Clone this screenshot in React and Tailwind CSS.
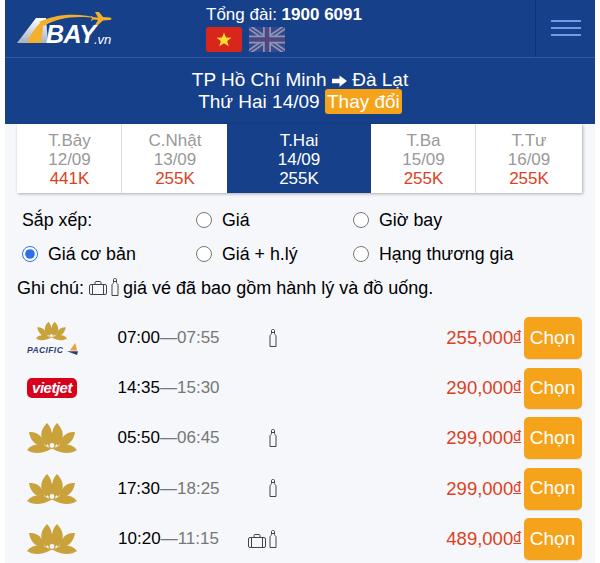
const Lotus = ({ className }) => (
  <svg viewBox="0 0 50 30" className={className} fill="#c9a23c">
    <path d="M20 0C13 7 12 15 19 23C26 17 27 7 20 0Z" />
    <path d="M30 0C37 7 38 15 31 23C24 17 23 7 30 0Z" />
    <path d="M2 9C10 8 17 14 18 24C9 24 3 17 2 9Z" />
    <path d="M48 9C40 8 33 14 32 24C41 24 47 17 48 9Z" />
    <path d="M0 27C6 20 15 20 24 26C15 31 6 31 0 27Z" />
    <path d="M50 27C44 20 35 20 26 26C35 31 44 31 50 27Z" />
    <path d="M25 9C21 14 20 18 21 22L29 22C30 18 29 14 25 9Z" />
    <circle cx="25" cy="22.500" r="3" fill="#f5f7fb" stroke="#c9a23c" strokeWidth="1.200" />
  </svg>
);

const Suitcase = ({ className }) => (
  <svg viewBox="0 0 18 14" className={className} fill="none" stroke="#444" strokeWidth="1">
    <rect x="0.500" y="3.500" width="17" height="10" rx="1.500" />
    <path d="M6 3.500V1.500C6 1 6.500 .5 7 .5H11C11.500 .5 12 1 12 1.500V3.500M3.500 3.500V13.500M14.500 3.500V13.500" />
  </svg>
);

const Bottle = ({ className }) => (
  <svg viewBox="0 0 8 18" className={className} fill="none" stroke="#444" strokeWidth="1">
    <path d="M1 17.500V7C1 6 2.500 5.500 2.500 4.500V1.500C2.500 1 3 .5 3.500 .5H4.500C5 .5 5.500 1 5.500 1.500V4.500C5.500 5.500 7 6 7 7V17.500Z" />
    <path d="M2.500 3.500H5.500" />
  </svg>
);

const Logo = () => (
  <div className="relative w-[96px] h-[40px] shrink-0">
    <svg viewBox="0 0 96 40" className="absolute inset-0 w-full h-full">
      <defs>
        <linearGradient id="a" x1="0" y1="0" x2="0" y2="1">
          <stop offset="0" stopColor="#ffffff" />
          <stop offset="1" stopColor="#a8afbd" />
        </linearGradient>
      </defs>
      <path d="M0 36L19 11H29L31 36Z" fill="url(#a)" />
      <path d="M10 36C14 26 20 18 27 13L24 36Z" fill="#f3b02c" />
      <path d="M22 15C38 7 60 5 85 12C60 8 42 10 27 19Z" fill="#f3b02c" />
      <path d="M78 5L82 5L86 10L93 10.500C95 11 95 12.500 93 13L86 13.500L81 18L78 18L81 13L76 12.500L75 14L74 14L75 11.500L74 9L75 9L76 10.500L81 10.500Z" fill="#f3b02c" />
    </svg>
    <span className="absolute left-[29px] top-[15px] text-[25px] leading-[24px] font-bold italic text-white tracking-[-0.5px]">BAY</span>
    <span className="absolute left-[77px] top-[25px] text-[13px] leading-[15px] italic text-white">.vn</span>
  </div>
);

const days = [
  { d: "T.Bảy", t: "12/09", p: "441K" },
  { d: "C.Nhật", t: "13/09", p: "255K" },
  { d: "T.Hai", t: "14/09", p: "255K", on: true },
  { d: "T.Ba", t: "15/09", p: "255K" },
  { d: "T.Tư", t: "16/09", p: "255K" },
];

const flights = [
  { l: "pacific", a: "07:00", b: "07:55", bottle: true, p: "255,000", h: "h-[42px]" },
  { l: "vietjet", a: "14:35", b: "15:30", p: "290,000", h: "h-[41px]" },
  { l: "vna", a: "05:50", b: "06:45", bottle: true, p: "299,000", h: "h-[42px]" },
  { l: "vna", a: "17:30", b: "18:25", bottle: true, p: "299,000", h: "h-[42px]" },
  { l: "vna", a: "10:20", b: "11:15", bottle: true, bag: true, p: "489,000", h: "h-[42px]" },
];

const Radio = ({ label, checked, className }) => (
  <label className={`flex items-center gap-[10px] ${className}`}>
    <input type="radio" name="sort" defaultChecked={checked} className="w-4 h-4 m-0 accent-[#2f6fed]" />
    <span>{label}</span>
  </label>
);

const Airline = ({ l }) => {
  if (l === "pacific")
    return (
      <div className="w-[50px] flex flex-col items-start">
        <Lotus className="w-[31px] h-[20px] ml-[9px]" />
        <div className="flex items-end gap-[4px] mt-[2px]">
          <span className="text-[8.500px] leading-[10px] font-bold italic text-[#2c3e78] tracking-[0.400px]">PACIFIC</span>
          <svg viewBox="0 0 12 14" className="w-[11px] h-[13px] -mb-[1px]">
            <path d="M9 0L11 8L3 8Z" fill="#e9a13b" />
            <path d="M0 9H12L11 13Z" fill="#2c3e78" />
          </svg>
        </div>
      </div>
    );
  if (l === "vietjet")
    return (
      <div className="w-[50px] h-[20px] rounded-[5px] bg-[#d9001b] flex items-center justify-center">
        <span className="text-[15px] leading-[20px] font-bold italic text-white tracking-[-0.5px]">vietjet</span>
      </div>
    );
  return <Lotus className="w-[50px] h-[30px]" />;
};

export default function App() {
  return (
    <div className="h-[563px] overflow-hidden bg-white px-[5px] text-black [font-family:'Liberation_Sans',Arial,sans-serif]">
      <div className="w-[590px] h-full bg-[#f5f7fb]">
        <header className="h-[58px] bg-[#16408a] border-b border-[#2f5ba8] flex text-white">
          <div className="w-[530px] flex shrink-0 pl-[12px] pt-[7px]">
            <Logo />
            <div className="ml-[93px] w-[200px] flex flex-col -mt-[1px]">
              <div className="text-[17px] leading-[18px] whitespace-nowrap">
                Tổng đài: <b>1900 6091</b>
              </div>
              <div className="flex gap-[7px] mt-[3px]">
                <svg viewBox="0 0 36 25" className="w-[36px] h-[25px]">
                  <rect width="36" height="25" rx="2.500" fill="#d8261c" />
                  <path d="M18 5.500L20 10.500L25.500 10.700L21.200 14L22.700 19.300L18 16.300L13.300 19.300L14.800 14L10.500 10.700L16 10.500Z" fill="#ffdf2b" />
                </svg>
                <svg viewBox="0 0 36 25" className="w-[36px] h-[25px] opacity-60">
                  <rect width="36" height="25" fill="#4c4d8e" />
                  <path d="M0 0L36 25M36 0L0 25" stroke="#d0d2dc" strokeWidth="5" />
                  <path d="M0 0L36 25M36 0L0 25" stroke="#7d4a78" strokeWidth="1.500" />
                  <path d="M18 0V25M0 12.500H36" stroke="#d0d2dc" strokeWidth="8" />
                  <path d="M18 0V25M0 12.500H36" stroke="#7d4a78" strokeWidth="4.500" />
                </svg>
              </div>
            </div>
          </div>
          <div className="flex-1 border-l border-[#0f3273] flex flex-col items-center justify-center gap-[5px] pb-[1px]">
            <span className="block w-[30px] h-[2px] bg-[#7399ea]" />
            <span className="block w-[30px] h-[2px] bg-[#7399ea]" />
            <span className="block w-[30px] h-[2px] bg-[#7399ea]" />
          </div>
        </header>

        <section className="h-[66px] bg-[#16408a] text-white text-center text-[19px] leading-[22px] pt-[11px]">
          <div className="h-[22px]">
            TP Hồ Chí Minh{" "}
            <svg viewBox="0 0 16 12" className="inline-block w-[15px] h-[12px] align-[-1px]" fill="#ffffff">
              <path d="M0 3.500H8V0L16 6L8 12V8.500H0Z" />
            </svg>{" "}
            Đà Lạt
          </div>
          <div className="h-[22px]">
            Thứ Hai 14/09{" "}
            <span className="inline-block bg-[#f5a31a] rounded-[3px] px-[2px] pt-[1px] leading-[24px] align-top -translate-y-[2px]">Thay đổi</span>
          </div>
        </section>

        <div className="ml-[12px] mr-[13px] flex h-[69px] bg-white shadow-[1px_1px_3px_rgba(0,0,0,0.3)] text-[17px] leading-[19px] text-center">
          {days.map((x, i) => (
            <div
              key={x.d}
              className={`pt-[7px] ${x.on ? "w-[144px] bg-[#16408a] text-white" : "w-[105px] pl-[1px] text-[#999999]"} ${i === 0 || i === 3 ? "border-r border-[#dddddd]" : ""}`}
            >
              <div>{x.d}</div>
              <div>{x.t}</div>
              <div className={x.on ? "" : "text-[#dd3f21]"}>{x.p}</div>
            </div>
          ))}
        </div>

        <div className="text-[17.800px] leading-[20px] pt-[17px]">
          <div className="flex items-center h-[20px] pl-[17px]">
            <span className="w-[174px]">Sắp xếp:</span>
            <Radio label="Giá" className="w-[157px]" />
            <Radio label="Giờ bay" />
          </div>
          <div className="flex items-center h-[20px] pl-[17px] mt-[14px]">
            <Radio label="Giá cơ bản" checked className="w-[174px]" />
            <Radio label="Giá + h.lý" className="w-[157px]" />
            <Radio label="Hạng thương gia" />
          </div>
          <div className="flex items-center h-[20px] pl-[12px] mt-[14px] text-[18px]">
            <span>Ghi chú:</span>
            <Suitcase className="w-[18px] h-[14px] ml-[5px]" />
            <Bottle className="w-[8px] h-[18px] ml-[4px] -mt-[3px]" />
            <span className="ml-[4px]">giá vé đã bao gồm hành lý và đồ uống.</span>
          </div>
        </div>

        <div className="mt-[19px] pl-[21px] flex flex-col gap-[8.500px] text-[17px]">
          {flights.map((f, i) => (
            <div key={i} className={`flex items-center ${f.h}`}>
              <div className="w-[52px] flex justify-center shrink-0">
                <Airline l={f.l} />
              </div>
              <div className="w-[105px] ml-[38px] shrink-0 whitespace-nowrap text-center">
                <span>{f.a}</span>
                <span className="text-[#777777]">—{f.b}</span>
              </div>
              <div className="w-[56px] flex items-center justify-end gap-[3px] shrink-0 -mt-[1px]">
                {f.bag && <Suitcase className="w-[18px] h-[14px] mt-[4px]" />}
                {f.bottle && <Bottle className="w-[8px] h-[18px]" />}
              </div>
              <div className="flex-1 text-right text-[18.500px] text-[#dd3f21] whitespace-nowrap mr-[3px]">
                {f.p}
                <span className="text-[14px] underline align-[3px]">đ</span>
              </div>
              <button className={`w-[58px] mr-[13px] pr-[1px] ${f.h} rounded-[5px] bg-[#f5a31a] text-white text-[19px] shadow-[0_1px_1px_rgba(0,0,0,0.1)]`}>
                Chọn
              </button>
            </div>
          ))}
        </div>
      </div>
    </div>
  );
}
